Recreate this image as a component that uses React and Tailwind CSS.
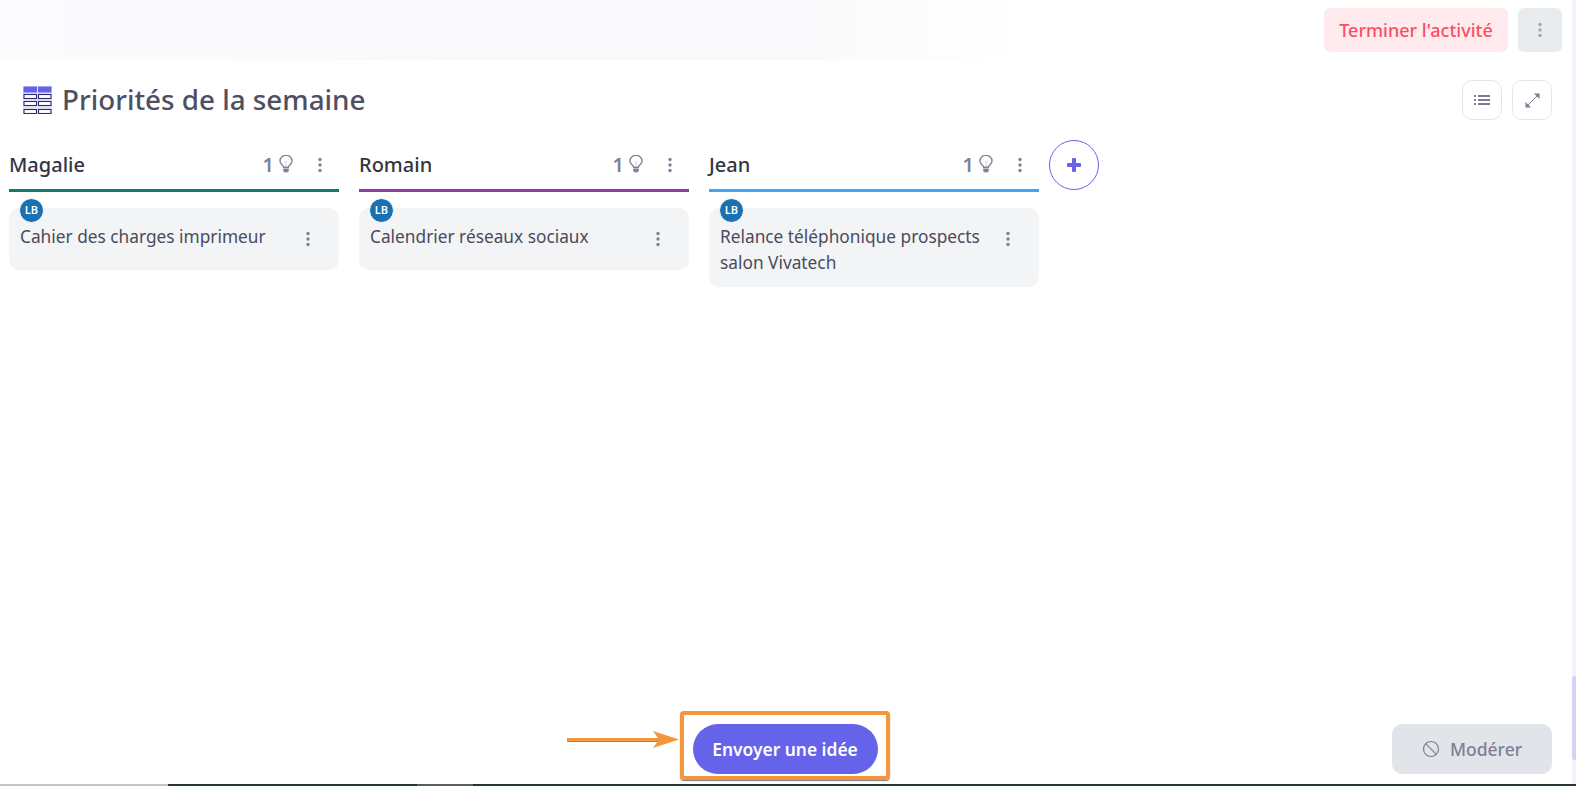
import { Ban } from "lucide-react";

const columns = [
  {
    name: "Magalie",
    color: "bg-[#0f7b68]",
    cards: ["Cahier des charges imprimeur"],
  },
  {
    name: "Romain",
    color: "bg-[#8e3ca9]",
    cards: ["Calendrier réseaux sociaux"],
  },
  {
    name: "Jean",
    color: "bg-[#42a5f5]",
    cards: ["Relance téléphonique prospects salon Vivatech"],
  },
];

function Kebab({ className }) {
  return (
    <svg width="4" height="16" viewBox="0 0 4 16" className={className}>
      <circle cx="2" cy="2.5" r="1.7" fill="currentColor" />
      <circle cx="2" cy="8" r="1.7" fill="currentColor" />
      <circle cx="2" cy="13.5" r="1.7" fill="currentColor" />
    </svg>
  );
}

function Bulb() {
  return (
    <svg width="14" height="18" viewBox="0 0 14 18" fill="none">
      <path
        d="M4.6 12.2C4.4 10.4 1 9.2 1 6a6 5.6 0 0 1 12 0c0 3.2-3.4 4.4-3.6 6.2z"
        stroke="#7f8196"
        strokeWidth="1.4"
      />
      <path d="M7 12V7.5M5.4 6.2L7 7.5l1.6-1.3" stroke="#c4c5d0" strokeWidth="0.7" />
      <path d="M4.2 13.6h5.6v1.8c0 .9-1 2-2.8 2s-2.8-1.1-2.8-2z" fill="#7f8196" />
    </svg>
  );
}

function TableIcon() {
  const rows = [8, 15, 23];
  return (
    <svg width="29" height="28" viewBox="0 0 29 28">
      <rect width="29" height="28" fill="#e4e3f8" />
      <rect x="0.5" y="0.5" width="13.5" height="6" fill="#6563ea" />
      <rect x="15" y="0.5" width="13.5" height="6" fill="#6563ea" />
      {rows.map((y) => (
        <g key={y} fill="#fff" stroke="#2d2b72" strokeWidth="1.1">
          <rect x="1" y={y + 0.5} width="12.5" height="4" />
          <rect x="15.5" y={y + 0.5} width="12.5" height="4" />
        </g>
      ))}
    </svg>
  );
}

function Column({ column }) {
  return (
    <div className="w-[330px]">
      <div className="flex h-[49px] items-center">
        <span className="flex-1 text-[20px] font-medium text-[#33343f]">
          {column.name}
        </span>
        <span className="text-[20px] font-semibold text-[#7f8196]">1</span>
        <span className="ml-[5px] mt-[-1px]">
          <Bulb />
        </span>
        <Kebab className="ml-[25px] mr-[17px] text-[#7f8196]" />
      </div>
      <div className={`h-[3px] ${column.color}`} />
      {column.cards.map((card) => (
        <div
          key={card}
          className="relative mt-4 flex min-h-[62px] rounded-[10px] bg-[#f3f4f6] pb-[11px] pl-[11px] pr-[29px] pt-[16px]"
        >
          <div className="absolute left-[10px] top-[-10px] flex h-[25px] w-[25px] items-center justify-center rounded-full border border-white bg-[#1a70b0] text-[11px] font-semibold text-white">
            LB
          </div>
          <p className="flex-1 text-[17.3px] leading-[26px] text-[#4a4b5c]">
            {card}
          </p>
          <Kebab className="ml-[18px] mt-[7px] shrink-0 text-[#7f8196]" />
        </div>
      ))}
    </div>
  );
}

export default function App() {
  return (
    <div className="flex h-[786px] w-[1576px] flex-col overflow-hidden bg-[#f3f2fb] font-['Noto_Sans',sans-serif]">
      <div className="flex min-h-0 flex-1">
        <main className="flex w-[1572px] flex-col rounded-tr-[10px] bg-white">
          <header className="flex h-[60px] shrink-0 items-center justify-end gap-[10px] bg-gradient-to-r from-[#fbfbfd] via-[#f9f9fb] via-50% to-white to-65% pr-[10px]">
            <button className="h-[44px] w-[184px] rounded-[6px] bg-[#ffebee] text-[18px] font-medium text-[#fb4f60]">
              Terminer l'activité
            </button>
            <button className="flex h-[44px] w-[44px] items-center justify-center rounded-[6px] bg-[#e9ecef]">
              <Kebab className="text-[#a3a6b4]" />
            </button>
          </header>

          <div className="flex h-[60px] shrink-0 items-center pl-[23px] pr-5 pt-[20px]">
            <TableIcon />
            <h1 className="ml-[10px] flex-1 text-[27.8px] font-medium text-[#4e4f63]">
              Priorités de la semaine
            </h1>
            <div className="flex gap-[10px]">
              <button className="flex h-[40px] w-[40px] items-center justify-center rounded-[10px] border border-[#e3e4ea]">
                <svg width="16" height="12" viewBox="0 0 16 12" fill="#7c7d92">
                  <rect x="0" y="1" width="2" height="2" />
                  <rect x="0" y="5" width="2" height="2" />
                  <rect x="0" y="9" width="2" height="2" />
                  <rect x="4" y="1" width="12" height="2" />
                  <rect x="4" y="5" width="12" height="2" />
                  <rect x="4" y="9" width="12" height="2" />
                </svg>
              </button>
              <button className="flex h-[40px] w-[40px] items-center justify-center rounded-[10px] border border-[#e3e4ea]">
                <svg width="15" height="15" viewBox="0 0 15 15" fill="#7c7d92">
                  <path d="M9 .5h5.5V6z" />
                  <path d="M6 14.5H.5V9z" />
                  <path d="M3 12l9-9" stroke="#7c7d92" strokeWidth="1" />
                </svg>
              </button>
            </div>
          </div>

          <div className="flex flex-1 items-start gap-5 pl-[9px] pt-[20px]">
            {columns.map((column) => (
              <Column key={column.name} column={column} />
            ))}
            <button className="ml-[-10px] flex h-[50px] w-[50px] items-center justify-center rounded-full border border-[#6563ea]">
              <svg width="16" height="16" viewBox="0 0 16 16" fill="#6563ea">
                <rect x="6" y="1" width="4" height="14" rx="1" />
                <rect x="1" y="6" width="14" height="4" rx="1" />
              </svg>
            </button>
          </div>

          <footer className="grid h-[60px] shrink-0 grid-cols-[1fr_auto_1fr] items-start pl-[18px] pr-5">
            <div />
            <div className="relative">
              <button className="h-[50px] w-[185px] rounded-full bg-[#6563ea] text-[17.4px] font-semibold text-white">
                Envoyer une idée
              </button>
              {/* orange annotation drawn on top of the screenshot */}
              <div className="absolute left-[-13px] right-[-12px] top-[-13px] h-[69px] rounded-[4px] border-[4px] border-[#f3963e] shadow-[0_1px_1px_#777]" />
              <svg
                width="113"
                height="20"
                viewBox="0 0 113 20"
                className="absolute left-[-126px] top-[6px]"
              >
                <rect x="0" y="8" width="95" height="3" fill="#f3963e" />
                <rect x="0" y="11" width="95" height="1" fill="#8a8a8a" />
                <path d="M86 1l26 8.5-26 8.5 6-8.5z" fill="#f3963e" />
              </svg>
            </div>
            <button className="flex h-[50px] w-[160px] items-center justify-center gap-[10px] justify-self-end rounded-[10px] bg-[#e1e4e9] text-[17.5px] font-medium text-[#7c7f96]">
              <Ban size={18} strokeWidth={1.6} />
              Modérer
            </button>
          </footer>
        </main>
        <div className="flex w-[4px] flex-col justify-end pb-[24px]">
          <div className="h-[84px] rounded-l-[3px] bg-[#d5d3f5]" />
        </div>
      </div>
      <div className="flex h-[2px] shrink-0">
        <div className="w-[168px] bg-[#c4c4c4]" />
        <div className="w-[249px] bg-[#25343b]" />
        <div className="w-[56px] bg-[#56625f]" />
        <div className="flex-1 bg-[#25343b]" />
      </div>
    </div>
  );
}
